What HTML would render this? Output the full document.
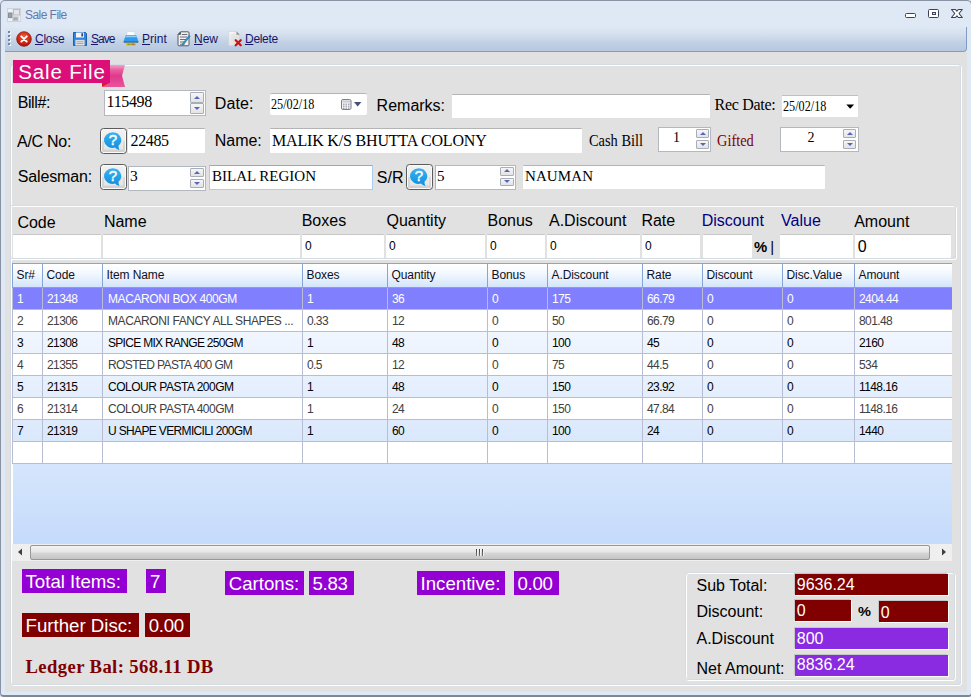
<!DOCTYPE html>
<html><head><meta charset="utf-8"><title>Sale File</title>
<style>
*{box-sizing:border-box;margin:0;padding:0}
html,body{width:971px;height:697px;overflow:hidden;background:#dfe9f5}
body{position:relative;font-family:"Liberation Sans",sans-serif;color:#000}
body>div,body>svg{position:absolute}
#frame{left:0;top:0;width:972px;height:697px;background:#dfe9f5;border:1px solid #8a93a3;border-bottom:2px solid #7f8797;border-radius:5px 5px 4px 4px}
#tb{left:5px;top:27px;width:962px;height:25px;background:linear-gradient(#dee8f4 0%,#d5e0ee 30%,#c3d2e5 60%,#b6c8de 100%);border-bottom:1px solid #7f9cc6;border-right:1px solid #7f9cc6;border-radius:0 0 4px 0}
.grip{width:2px;height:2px;background:#6d86b0;box-shadow:1px 1px 0 #f4f8fc}
#content{left:5px;top:52px;width:962px;height:640px;background:#e1e1e1}
.t{white-space:nowrap;line-height:1}
.t u{text-decoration:underline;text-underline-offset:1px}
.ar{font-family:"Liberation Sans",sans-serif}
.tm{font-family:"Liberation Serif",serif}
.box{background:#fff}
.gb{border:1px solid #fff;border-radius:3px}
.gbi{border-left-color:transparent;border-radius:0 3px 3px 0}
.gbi::before{border-left-color:transparent !important}
.gb::before{content:"";position:absolute;left:-2px;top:-2px;right:0;bottom:0;border:1px solid #d3dbe3;border-radius:3px}
.spb{border:1px solid #a9adb8;border-radius:1px;background:linear-gradient(#f6f6f6,#e3e3e6)}
.spb i{position:absolute;left:50%;top:50%;width:0;height:0;border-left:3px solid transparent;border-right:3px solid transparent;margin-left:-3px}
.spb i.up{border-bottom:3.5px solid #5468ba;margin-top:-2px}
.spb i.dn{border-top:3.5px solid #5468ba;margin-top:-1.5px}
.qb{border:1px solid #5c5c5c;border-radius:3.5px;background:linear-gradient(#f3f3f3 0%,#ececec 48%,#dcdcdc 52%,#d0d0d0 100%);box-shadow:inset 0 0 0 1px #fafafa}
#grid{left:12px;top:263px;width:940px;height:281px;background:linear-gradient(#ffffff,#c5dbfb)}
.gh{background:#fff;border-top:1px solid #8aa4cc}
.ghc{background:linear-gradient(#ffffff 0%,#f3f8ff 40%,#d4e5fb 100%);border-left:1px solid #86a4d4;border-bottom:1px solid #86a3d0;font-size:12px;color:#101020}
.ghc span{position:absolute;left:3.5px;top:4px;white-space:nowrap;line-height:14px;letter-spacing:-0.1px}
.gc{overflow:hidden;font-size:12px;border-left:1px solid #b9bdd3;border-bottom:1px solid #b9bdd3}
.gc span{position:absolute;left:4px;top:4px;white-space:nowrap;line-height:14px;letter-spacing:-0.6px}
.gc.nm span{left:5px}
.r0{background:#8080ff;color:#fff;border-color:#b9bdd3}
.ra{background:transparent;color:#000}
.rb{background:#fff;color:#404040}
#sb{left:12px;top:544px;width:940px;height:17px;background:#efefef}
#thumb{left:30px;top:545px;width:900px;height:15px;border:1px solid #979797;border-radius:2px;background:linear-gradient(#f3f3f3 0%,#e6e6e6 45%,#d6d6d6 55%,#c4c4c6 100%)}
.gripl{width:1px;height:7px;background:linear-gradient(#3a3a3a,#7a7a7a);box-shadow:1px 0 0 rgba(255,255,255,.65)}
</style></head><body>
<div id="frame"></div>
<svg width="0" height="0" style="position:absolute;left:0;top:0"><defs><linearGradient id="qg" x1="0" y1="0" x2="0" y2="1"><stop offset="0" stop-color="#38b2f2"/><stop offset="1" stop-color="#0f8fdc"/></linearGradient></defs></svg>
<svg style="position:absolute;left:7px;top:8px" width="14" height="14" viewBox="0 0 14 14"><rect x="0.5" y="0.5" width="13" height="13" fill="#e9edf2" stroke="#cdd3db"/><rect x="6.5" y="1.5" width="6" height="5.500" fill="#e4e6ea" stroke="#b9bec6"/><rect x="1.500" y="5" width="3.500" height="4.500" fill="#9a9ea6" stroke="#8a8e96"/><rect x="6" y="9" width="5" height="3.500" fill="#a9adb5" stroke="#c3c7cd"/><rect x="1.500" y="1.500" width="3.500" height="2.500" fill="#f1f3f6"/><rect x="1.500" y="11" width="1.500" height="2" fill="#f1f3f6"/><rect x="3.800" y="11" width="1.200" height="2" fill="#f1f3f6"/><rect x="12" y="9" width="1.200" height="3.500" fill="#f1f3f6"/></svg>
<div class="t ar " style="left:25px;top:9px;font-size:12px;color:#6678a4;letter-spacing:-0.55px">Sale File</div>
<svg style="position:absolute;left:900px;top:5px" width="68" height="18" viewBox="900 5 68 18"><rect x="905.5" y="13.5" width="10" height="4" rx="1" fill="#fff" stroke="#3d4157" stroke-width="1"/><rect x="928.5" y="9.500" width="10" height="8" rx="1" fill="#fff" stroke="#3d4157" stroke-width="1"/><rect x="932.5" y="12.5" width="3" height="2" fill="#dfe6f2" stroke="#3d4157" stroke-width="1"/><path d="M951.5 9.500h4l1.400 1.700l1.400-1.700h4l-3.300 4l3.300 4h-4l-1.400-1.700l-1.400 1.700h-4l3.300-4z" fill="#fff" stroke="#3d4157" stroke-width="1.100" stroke-linejoin="round"/></svg>
<div id="tb"></div>
<div class="grip" style="left:8px;top:31px"></div>
<div class="grip" style="left:8px;top:35px"></div>
<div class="grip" style="left:8px;top:39px"></div>
<div class="grip" style="left:8px;top:43px"></div>
<svg style="position:absolute;left:16px;top:31px" width="16" height="16" viewBox="0 0 16 16"><defs><radialGradient id="rg" cx="50%" cy="35%" r="65%"><stop offset="0" stop-color="#f0603a"/><stop offset="0.6" stop-color="#d42a12"/><stop offset="1" stop-color="#a80e08"/></radialGradient></defs><circle cx="8" cy="8" r="7.300" fill="url(#rg)" stroke="#8e1a10" stroke-width="0.8"/><path d="M5.300 5.300L10.700 10.700M10.700 5.300L5.300 10.700" stroke="#fff" stroke-width="1.900" stroke-linecap="round"/></svg>
<div class="t ar " style="left:35px;top:33px;font-size:12px;color:#15156b;letter-spacing:-0.25px"><u>C</u>lose</div>
<svg style="position:absolute;left:72px;top:31px" width="16" height="16" viewBox="0 0 16 16"><path d="M1.500 1.500h12l1 1v12h-13z" fill="#2f86e0" stroke="#1a5fb0" stroke-width="1"/><rect x="4" y="1.500" width="8" height="5" fill="#f4f7fb"/><rect x="9.300" y="2.200" width="1.800" height="3.300" fill="#3a4a66"/><rect x="3.500" y="9" width="9" height="5.500" fill="#e8e8e8" stroke="#b8b8b8" stroke-width="0.5"/><path d="M4.500 10.800h7M4.500 12.600h7" stroke="#9a9a9a" stroke-width="0.9"/></svg>
<div class="t ar " style="left:91px;top:33px;font-size:12px;color:#15156b;letter-spacing:-0.95px"><u>S</u>ave</div>
<svg style="position:absolute;left:123px;top:31px" width="16" height="16" viewBox="0 0 16 16"><path d="M4.200 0.500h7.200l0.900 4.500h-9z" fill="#fbfcfd" stroke="#cfd8e2" stroke-width="0.7"/><path d="M2.800 4.200h10.400l2.300 6.300q0.200 0.900-0.800 0.900h-13.400q-1 0-0.800-0.900z" fill="#2f9bee"/><path d="M2.600 5h10.800l0.500 1.300h-11.800z" fill="#8fd0fb"/><path d="M0.800 10.200h14.400v1q0 0.600-0.600 0.600h-13.200q-0.600 0-0.600-0.600z" fill="#3a6ea8"/><rect x="3" y="11.800" width="10" height="3" fill="#d9c228"/><rect x="4.500" y="12.600" width="3" height="1.200" fill="#7a9a2a"/><rect x="8.500" y="12.600" width="3" height="1.200" fill="#b85a1a"/></svg>
<div class="t ar " style="left:142px;top:33px;font-size:12px;color:#15156b;letter-spacing:0.05px"><u>P</u>rint</div>
<svg style="position:absolute;left:177px;top:31px" width="16" height="16" viewBox="0 0 16 16"><path d="M3.500 0.800h7.500q1 0 1 1v12q0 1-1 1h-9q-1 0-1-1v-10.500z" fill="#f1f1f1" stroke="#555a62" stroke-width="1"/><path d="M1 3.800l2.800-3v3z" fill="#3a3d44"/><path d="M4.800 3.500h5.500M3 6h7M3 8.500h6M3 11h5M3 13.300h4.500" stroke="#6a6e78" stroke-width="1.100"/><path d="M13.200 5.200l-6.300 8l-1.400 1.400l0.200-2.200l6.300-8z" fill="#2f9dcc" stroke="#1c6f9a" stroke-width="0.6"/></svg>
<div class="t ar " style="left:194px;top:33px;font-size:12px;color:#15156b;letter-spacing:-0.05px"><u>N</u>ew</div>
<svg style="position:absolute;left:228px;top:31px" width="16" height="16" viewBox="0 0 16 16"><defs><linearGradient id="dg" x1="0" y1="0" x2="1" y2="1"><stop offset="0" stop-color="#fbfbfb"/><stop offset="1" stop-color="#d6d6d6"/></linearGradient></defs><path d="M0.800 0.500h7.700l3.200 3.200v11h-10.900z" fill="url(#dg)" stroke="#cfcfcf" stroke-width="0.6"/><path d="M8.500 0.500v3.200h3.200z" fill="#8a8a8a"/><path d="M2.500 4h5M2.500 6h7M2.500 8h4.500M2.500 10h3.500" stroke="#dadada" stroke-width="0.8"/><path d="M7.700 9.300l5 5M12.700 9.300l-5 5" stroke="#c81414" stroke-width="2.300" stroke-linecap="round"/></svg>
<div class="t ar " style="left:245px;top:33px;font-size:12px;color:#15156b;letter-spacing:-0.3px"><u>D</u>elete</div>
<div id="content"></div>
<div class="gb" style="left:11px;top:65px;width:951px;height:621px"></div>
<svg style="position:absolute;left:12px;top:59px" width="116" height="29" viewBox="12 59 116 29"><defs><linearGradient id="rb" x1="0" y1="0" x2="0" y2="1"><stop offset="0" stop-color="#f4a2c9"/><stop offset="0.22" stop-color="#ea5ea1"/><stop offset="0.5" stop-color="#e1388a"/><stop offset="1" stop-color="#e9559d"/></linearGradient></defs><path d="M110 65H125L122 75.800L125 87H102L110 83z" fill="url(#rb)"/><path d="M102 83H110L102 87z" fill="#d81e1e"/><rect x="13" y="60" width="97" height="23" fill="#dc0f78"/></svg>
<div class="t ar " style="left:18.3px;top:62px;font-size:20.5px;color:#fff;letter-spacing:0.85px">Sale File</div>
<div class="t ar " style="left:17.7px;top:95px;font-size:16px;color:#000;letter-spacing:-0.4px">Bill#:</div>
<div class="box" style="left:104px;top:90px;width:102px;height:26px;border:1px solid #b3b7c0"></div>
<div class="t tm " style="left:106.6px;top:94px;font-size:16px;color:#000;letter-spacing:-0.35px">115498</div>
<div class="spb" style="left:190px;top:92px;width:14px;height:11.0px"><i class="up"></i></div>
<div class="spb" style="left:190px;top:103.0px;width:14px;height:11.0px"><i class="dn"></i></div>
<div class="t ar " style="left:214.8px;top:96px;font-size:16px;color:#000;letter-spacing:0.1px">Date:</div>
<div class="box" style="left:270px;top:93px;width:97px;height:22px;border-top:1px solid #b4b4b4;border-radius:2px"></div>
<div class="t tm " style="left:270.7px;top:98px;font-size:14px;color:#000;transform:scaleX(0.87);transform-origin:0 0">25/02/18</div>
<svg style="position:absolute;left:341px;top:99px" width="21" height="11" viewBox="0 0 21 11"><rect x="0.5" y="0.5" width="9.500" height="10" rx="1.500" fill="#f2f2f4" stroke="#7a7e8c"/><rect x="1.500" y="1.500" width="7.500" height="2" fill="#c9ccd6"/><path d="M2 5.200h6.500M2 7.200h6.500M2 9.200h6.500" stroke="#8a8e9c" stroke-width="1" stroke-dasharray="1.500 1"/><path d="M13 3h7.400l-3.700 4.500z" fill="#44507a"/></svg>
<div class="t ar " style="left:376.6px;top:98px;font-size:16px;color:#000;">Remarks:</div>
<div class="box" style="left:452px;top:94px;width:258px;height:24px;border-top:1px solid #b4b4b4;border-radius:1px"></div>
<div class="t tm " style="left:714.5px;top:97px;font-size:16px;color:#000;letter-spacing:-0.29px">Rec Date:</div>
<div class="box" style="left:782px;top:95px;width:76px;height:22px;border-top:1px solid #c0c0c0"></div>
<div class="t tm " style="left:783px;top:100px;font-size:14px;color:#000;transform:scaleX(0.87);transform-origin:0 0">25/02/18</div>
<svg style="position:absolute;left:846px;top:104px" width="9" height="5" viewBox="0 0 9 5"><path d="M0.300 0.500h7.800l-3.900 4.200z" fill="#000"/></svg>
<div class="t ar " style="left:17px;top:134px;font-size:16px;color:#000;letter-spacing:-0.27px">A/C No:</div>
<div class="qb" style="left:100px;top:128px;width:27px;height:26px"><svg width="22" height="22" viewBox="0 0 22 22" style="position:absolute;left:1.0px;top:0.5px"><rect x="2" y="1.500" width="19" height="18" fill="#eeeeee" opacity="0.7"/><path d="M10.800 2.300a8.800 7.800 0 1 0 2.400 15.300c1 1.300 2.400 2.100 4.300 2.300c-0.800-1.300-1.100-2.600-0.900-4.300a8.800 7.800 0 0 0-5.800-13.300z" fill="url(#qg)"/><text x="10.800" y="15.200" text-anchor="middle" font-family="Liberation Sans, sans-serif" font-size="15" fill="#fff" stroke="#fff" stroke-width="0.45">?</text></svg></div>
<div class="box" style="left:128px;top:128px;width:77px;height:25px;border-top:1px solid #b4b4b4;border-radius:1px"></div>
<div class="t tm " style="left:130.5px;top:133px;font-size:16px;color:#000;letter-spacing:-0.35px">22485</div>
<div class="t ar " style="left:214.7px;top:133px;font-size:16px;color:#000;">Name:</div>
<div class="box" style="left:270px;top:128px;width:312px;height:25px;border-top:1px solid #b4b4b4;border-radius:1px"></div>
<div class="t tm " style="left:272px;top:133px;font-size:16px;color:#000;letter-spacing:-0.18px">MALIK K/S BHUTTA COLONY</div>
<div class="t tm " style="left:589.2px;top:133px;font-size:16px;color:#000;transform:scaleX(0.9);transform-origin:0 0">Cash Bill</div>
<div class="box" style="left:658px;top:127px;width:53px;height:25px;border:1px solid #b3b7c0"></div>
<div class="t tm " style="left:673px;top:131px;font-size:14px;color:#000;">1</div>
<div class="spb" style="left:696px;top:129px;width:13px;height:9.0px"><i class="up"></i></div>
<div class="spb" style="left:696px;top:140.0px;width:13px;height:9.0px"><i class="dn"></i></div>
<div class="t tm " style="left:717px;top:133px;font-size:16px;color:#800000;transform:scaleX(0.9);transform-origin:0 0">Gifted</div>
<div class="box" style="left:780px;top:127px;width:79px;height:25px;border:1px solid #b3b7c0"></div>
<div class="t tm " style="left:807.5px;top:131px;font-size:14px;color:#000;">2</div>
<div class="spb" style="left:843px;top:129px;width:13px;height:9.0px"><i class="up"></i></div>
<div class="spb" style="left:843px;top:140.0px;width:13px;height:9.0px"><i class="dn"></i></div>
<div class="t ar " style="left:17.7px;top:169px;font-size:16px;color:#000;letter-spacing:-0.13px">Salesman:</div>
<div class="qb" style="left:100px;top:164px;width:27px;height:26px"><svg width="22" height="22" viewBox="0 0 22 22" style="position:absolute;left:1.0px;top:0.5px"><rect x="2" y="1.500" width="19" height="18" fill="#eeeeee" opacity="0.7"/><path d="M10.800 2.300a8.800 7.800 0 1 0 2.400 15.300c1 1.300 2.400 2.100 4.300 2.300c-0.800-1.300-1.100-2.600-0.900-4.300a8.800 7.800 0 0 0-5.800-13.300z" fill="url(#qg)"/><text x="10.800" y="15.200" text-anchor="middle" font-family="Liberation Sans, sans-serif" font-size="15" fill="#fff" stroke="#fff" stroke-width="0.45">?</text></svg></div>
<div class="box" style="left:128px;top:166px;width:78px;height:25px;border:1px solid #b3b7c0"></div>
<div class="t tm " style="left:130px;top:168px;font-size:15.5px;color:#000;">3</div>
<div class="spb" style="left:190px;top:168px;width:14px;height:9.0px"><i class="up"></i></div>
<div class="spb" style="left:190px;top:179.0px;width:14px;height:9.0px"><i class="dn"></i></div>
<div class="box" style="left:209px;top:165px;width:164px;height:25px;border:1px solid #a9cdf0;border-top-color:#7fb0e4;border-radius:1px"></div>
<div class="t tm " style="left:212px;top:169px;font-size:15px;color:#000;">BILAL REGION</div>
<div class="t ar " style="left:376.8px;top:170px;font-size:16px;color:#000;">S/R</div>
<div class="qb" style="left:406px;top:164px;width:27px;height:26px"><svg width="22" height="22" viewBox="0 0 22 22" style="position:absolute;left:1.0px;top:0.5px"><rect x="2" y="1.500" width="19" height="18" fill="#eeeeee" opacity="0.7"/><path d="M10.800 2.300a8.800 7.800 0 1 0 2.400 15.300c1 1.300 2.400 2.100 4.300 2.300c-0.800-1.300-1.100-2.600-0.900-4.300a8.800 7.800 0 0 0-5.800-13.300z" fill="url(#qg)"/><text x="10.800" y="15.200" text-anchor="middle" font-family="Liberation Sans, sans-serif" font-size="15" fill="#fff" stroke="#fff" stroke-width="0.45">?</text></svg></div>
<div class="box" style="left:435px;top:165px;width:81px;height:25px;border:1px solid #b3b7c0"></div>
<div class="t tm " style="left:437px;top:169px;font-size:15px;color:#000;">5</div>
<div class="spb" style="left:500px;top:167px;width:14px;height:8.5px"><i class="up"></i></div>
<div class="spb" style="left:500px;top:177.5px;width:14px;height:8.5px"><i class="dn"></i></div>
<div class="box" style="left:523px;top:165px;width:302px;height:24px;border-top:1px solid #b4b4b4;border-radius:1px"></div>
<div class="t tm " style="left:525px;top:169px;font-size:15px;color:#000;letter-spacing:0.1px">NAUMAN</div>
<div class="gb gbi" style="left:11px;top:206px;width:946px;height:54px"></div>
<div class="t ar " style="left:17.4px;top:215px;font-size:16px;color:#000;">Code</div>
<div class="t ar " style="left:103.9px;top:214px;font-size:16px;color:#000;">Name</div>
<div class="t ar " style="left:301.7px;top:213px;font-size:16px;color:#000;">Boxes</div>
<div class="t ar " style="left:386.5px;top:213px;font-size:16px;color:#000;">Quantity</div>
<div class="t ar " style="left:487.5px;top:213px;font-size:16px;color:#000;">Bonus</div>
<div class="t ar " style="left:549px;top:213px;font-size:16px;color:#000;">A.Discount</div>
<div class="t ar " style="left:641.4px;top:213px;font-size:16px;color:#000;">Rate</div>
<div class="t ar " style="left:701.7px;top:213px;font-size:16px;color:#000080;">Discount</div>
<div class="t ar " style="left:781.1px;top:213px;font-size:16px;color:#000080;">Value</div>
<div class="t ar " style="left:854.2px;top:214px;font-size:16px;color:#000;">Amount</div>
<div class="box" style="left:13px;top:234px;width:88px;height:24px;border-top:1px solid #c6c6c6;border-radius:1px"></div>
<div class="box" style="left:103px;top:234px;width:196.5px;height:24px;border-top:1px solid #c6c6c6;border-radius:1px"></div>
<div class="box" style="left:302px;top:234px;width:82px;height:24px;border-top:1px solid #c6c6c6;border-radius:1px"></div>
<div class="box" style="left:386px;top:234px;width:99px;height:24px;border-top:1px solid #c6c6c6;border-radius:1px"></div>
<div class="box" style="left:487px;top:234px;width:58px;height:24px;border-top:1px solid #c6c6c6;border-radius:1px"></div>
<div class="box" style="left:547px;top:234px;width:93px;height:24px;border-top:1px solid #c6c6c6;border-radius:1px"></div>
<div class="box" style="left:642px;top:234px;width:58px;height:24px;border-top:1px solid #c6c6c6;border-radius:1px"></div>
<div class="box" style="left:703px;top:234px;width:49px;height:24px;border-top:1px solid #c6c6c6;border-radius:1px"></div>
<div class="box" style="left:780px;top:234px;width:73px;height:24px;border-top:1px solid #c6c6c6;border-radius:1px"></div>
<div class="box" style="left:855px;top:234px;width:96px;height:24px;border-top:1px solid #c6c6c6;border-radius:1px"></div>
<div class="t ar " style="left:304.9px;top:240px;font-size:12px;color:#000;">0</div>
<div class="t ar " style="left:389px;top:240px;font-size:12px;color:#000;">0</div>
<div class="t ar " style="left:490px;top:240px;font-size:12px;color:#000;">0</div>
<div class="t ar " style="left:550px;top:240px;font-size:12px;color:#000;">0</div>
<div class="t ar " style="left:645px;top:240px;font-size:12px;color:#000;">0</div>
<div class="t ar " style="left:753.5px;top:240px;font-size:14px;color:#000;font-weight:bold;transform:scaleX(1.06);transform-origin:0 0">%</div>
<div class="t ar " style="left:770.3px;top:239px;font-size:15px;color:#000;">|</div>
<div class="t ar " style="left:857.7px;top:239px;font-size:16px;color:#000;">0</div>
<div id="grid"></div>
<div class="gh" style="left:12px;top:263px;width:940px;height:25px"></div>
<div class="ghc" style="left:12px;top:264px;width:30px;height:24px"><span>Sr#</span></div>
<div class="ghc" style="left:42px;top:264px;width:60px;height:24px"><span>Code</span></div>
<div class="ghc" style="left:102px;top:264px;width:200px;height:24px"><span>Item Name</span></div>
<div class="ghc" style="left:302px;top:264px;width:85px;height:24px"><span>Boxes</span></div>
<div class="ghc" style="left:387px;top:264px;width:100px;height:24px"><span>Quantity</span></div>
<div class="ghc" style="left:487px;top:264px;width:60px;height:24px"><span>Bonus</span></div>
<div class="ghc" style="left:547px;top:264px;width:95px;height:24px"><span>A.Discount</span></div>
<div class="ghc" style="left:642px;top:264px;width:60px;height:24px"><span>Rate</span></div>
<div class="ghc" style="left:702px;top:264px;width:80px;height:24px"><span>Discount</span></div>
<div class="ghc" style="left:782px;top:264px;width:72px;height:24px"><span>Disc.Value</span></div>
<div class="ghc" style="left:854px;top:264px;width:98px;height:24px"><span>Amount</span></div>
<div class="gc r0" style="left:12px;top:288px;width:30px;height:22px"><span>1</span></div>
<div class="gc r0" style="left:42px;top:288px;width:60px;height:22px"><span>21348</span></div>
<div class="gc r0 nm" style="left:102px;top:288px;width:200px;height:22px"><span style="letter-spacing:-0.4px">MACARONI BOX 400GM</span></div>
<div class="gc r0" style="left:302px;top:288px;width:85px;height:22px"><span>1</span></div>
<div class="gc r0" style="left:387px;top:288px;width:100px;height:22px"><span>36</span></div>
<div class="gc r0" style="left:487px;top:288px;width:60px;height:22px"><span>0</span></div>
<div class="gc r0" style="left:547px;top:288px;width:95px;height:22px"><span>175</span></div>
<div class="gc r0" style="left:642px;top:288px;width:60px;height:22px"><span>66.79</span></div>
<div class="gc r0" style="left:702px;top:288px;width:80px;height:22px"><span>0</span></div>
<div class="gc r0" style="left:782px;top:288px;width:72px;height:22px"><span>0</span></div>
<div class="gc r0" style="left:854px;top:288px;width:98px;height:22px"><span>2404.44</span></div>
<div class="gc rb" style="left:12px;top:310px;width:30px;height:22px"><span>2</span></div>
<div class="gc rb" style="left:42px;top:310px;width:60px;height:22px"><span>21306</span></div>
<div class="gc rb nm" style="left:102px;top:310px;width:200px;height:22px"><span style="letter-spacing:-0.4px">MACARONI FANCY ALL SHAPES ...</span></div>
<div class="gc rb" style="left:302px;top:310px;width:85px;height:22px"><span>0.33</span></div>
<div class="gc rb" style="left:387px;top:310px;width:100px;height:22px"><span>12</span></div>
<div class="gc rb" style="left:487px;top:310px;width:60px;height:22px"><span>0</span></div>
<div class="gc rb" style="left:547px;top:310px;width:95px;height:22px"><span>50</span></div>
<div class="gc rb" style="left:642px;top:310px;width:60px;height:22px"><span>66.79</span></div>
<div class="gc rb" style="left:702px;top:310px;width:80px;height:22px"><span>0</span></div>
<div class="gc rb" style="left:782px;top:310px;width:72px;height:22px"><span>0</span></div>
<div class="gc rb" style="left:854px;top:310px;width:98px;height:22px"><span>801.48</span></div>
<div class="gc ra" style="left:12px;top:332px;width:30px;height:22px"><span>3</span></div>
<div class="gc ra" style="left:42px;top:332px;width:60px;height:22px"><span>21308</span></div>
<div class="gc ra nm" style="left:102px;top:332px;width:200px;height:22px"><span style="letter-spacing:-0.7px">SPICE MIX RANGE 250GM</span></div>
<div class="gc ra" style="left:302px;top:332px;width:85px;height:22px"><span>1</span></div>
<div class="gc ra" style="left:387px;top:332px;width:100px;height:22px"><span>48</span></div>
<div class="gc ra" style="left:487px;top:332px;width:60px;height:22px"><span>0</span></div>
<div class="gc ra" style="left:547px;top:332px;width:95px;height:22px"><span>100</span></div>
<div class="gc ra" style="left:642px;top:332px;width:60px;height:22px"><span>45</span></div>
<div class="gc ra" style="left:702px;top:332px;width:80px;height:22px"><span>0</span></div>
<div class="gc ra" style="left:782px;top:332px;width:72px;height:22px"><span>0</span></div>
<div class="gc ra" style="left:854px;top:332px;width:98px;height:22px"><span>2160</span></div>
<div class="gc rb" style="left:12px;top:354px;width:30px;height:22px"><span>4</span></div>
<div class="gc rb" style="left:42px;top:354px;width:60px;height:22px"><span>21355</span></div>
<div class="gc rb nm" style="left:102px;top:354px;width:200px;height:22px"><span style="letter-spacing:-0.62px">ROSTED PASTA 400 GM</span></div>
<div class="gc rb" style="left:302px;top:354px;width:85px;height:22px"><span>0.5</span></div>
<div class="gc rb" style="left:387px;top:354px;width:100px;height:22px"><span>12</span></div>
<div class="gc rb" style="left:487px;top:354px;width:60px;height:22px"><span>0</span></div>
<div class="gc rb" style="left:547px;top:354px;width:95px;height:22px"><span>75</span></div>
<div class="gc rb" style="left:642px;top:354px;width:60px;height:22px"><span>44.5</span></div>
<div class="gc rb" style="left:702px;top:354px;width:80px;height:22px"><span>0</span></div>
<div class="gc rb" style="left:782px;top:354px;width:72px;height:22px"><span>0</span></div>
<div class="gc rb" style="left:854px;top:354px;width:98px;height:22px"><span>534</span></div>
<div class="gc ra" style="left:12px;top:376px;width:30px;height:22px"><span>5</span></div>
<div class="gc ra" style="left:42px;top:376px;width:60px;height:22px"><span>21315</span></div>
<div class="gc ra nm" style="left:102px;top:376px;width:200px;height:22px"><span style="letter-spacing:-0.48px">COLOUR PASTA 200GM</span></div>
<div class="gc ra" style="left:302px;top:376px;width:85px;height:22px"><span>1</span></div>
<div class="gc ra" style="left:387px;top:376px;width:100px;height:22px"><span>48</span></div>
<div class="gc ra" style="left:487px;top:376px;width:60px;height:22px"><span>0</span></div>
<div class="gc ra" style="left:547px;top:376px;width:95px;height:22px"><span>150</span></div>
<div class="gc ra" style="left:642px;top:376px;width:60px;height:22px"><span>23.92</span></div>
<div class="gc ra" style="left:702px;top:376px;width:80px;height:22px"><span>0</span></div>
<div class="gc ra" style="left:782px;top:376px;width:72px;height:22px"><span>0</span></div>
<div class="gc ra" style="left:854px;top:376px;width:98px;height:22px"><span>1148.16</span></div>
<div class="gc rb" style="left:12px;top:398px;width:30px;height:22px"><span>6</span></div>
<div class="gc rb" style="left:42px;top:398px;width:60px;height:22px"><span>21314</span></div>
<div class="gc rb nm" style="left:102px;top:398px;width:200px;height:22px"><span style="letter-spacing:-0.48px">COLOUR PASTA 400GM</span></div>
<div class="gc rb" style="left:302px;top:398px;width:85px;height:22px"><span>1</span></div>
<div class="gc rb" style="left:387px;top:398px;width:100px;height:22px"><span>24</span></div>
<div class="gc rb" style="left:487px;top:398px;width:60px;height:22px"><span>0</span></div>
<div class="gc rb" style="left:547px;top:398px;width:95px;height:22px"><span>150</span></div>
<div class="gc rb" style="left:642px;top:398px;width:60px;height:22px"><span>47.84</span></div>
<div class="gc rb" style="left:702px;top:398px;width:80px;height:22px"><span>0</span></div>
<div class="gc rb" style="left:782px;top:398px;width:72px;height:22px"><span>0</span></div>
<div class="gc rb" style="left:854px;top:398px;width:98px;height:22px"><span>1148.16</span></div>
<div class="gc ra" style="left:12px;top:420px;width:30px;height:22px"><span>7</span></div>
<div class="gc ra" style="left:42px;top:420px;width:60px;height:22px"><span>21319</span></div>
<div class="gc ra nm" style="left:102px;top:420px;width:200px;height:22px"><span style="letter-spacing:-0.65px">U SHAPE VERMICILI 200GM</span></div>
<div class="gc ra" style="left:302px;top:420px;width:85px;height:22px"><span>1</span></div>
<div class="gc ra" style="left:387px;top:420px;width:100px;height:22px"><span>60</span></div>
<div class="gc ra" style="left:487px;top:420px;width:60px;height:22px"><span>0</span></div>
<div class="gc ra" style="left:547px;top:420px;width:95px;height:22px"><span>100</span></div>
<div class="gc ra" style="left:642px;top:420px;width:60px;height:22px"><span>24</span></div>
<div class="gc ra" style="left:702px;top:420px;width:80px;height:22px"><span>0</span></div>
<div class="gc ra" style="left:782px;top:420px;width:72px;height:22px"><span>0</span></div>
<div class="gc ra" style="left:854px;top:420px;width:98px;height:22px"><span>1440</span></div>
<div class="gc rb" style="left:12px;top:442px;width:30px;height:22px"><span></span></div>
<div class="gc rb" style="left:42px;top:442px;width:60px;height:22px"><span></span></div>
<div class="gc rb nm" style="left:102px;top:442px;width:200px;height:22px"><span></span></div>
<div class="gc rb" style="left:302px;top:442px;width:85px;height:22px"><span></span></div>
<div class="gc rb" style="left:387px;top:442px;width:100px;height:22px"><span></span></div>
<div class="gc rb" style="left:487px;top:442px;width:60px;height:22px"><span></span></div>
<div class="gc rb" style="left:547px;top:442px;width:95px;height:22px"><span></span></div>
<div class="gc rb" style="left:642px;top:442px;width:60px;height:22px"><span></span></div>
<div class="gc rb" style="left:702px;top:442px;width:80px;height:22px"><span></span></div>
<div class="gc rb" style="left:782px;top:442px;width:72px;height:22px"><span></span></div>
<div class="gc rb" style="left:854px;top:442px;width:98px;height:22px"><span></span></div>
<div style="left:12px;top:464px;width:1px;height:80px;background:#fff"></div>
<div id="sb"></div>
<div id="thumb"></div>
<svg style="position:absolute;left:17px;top:548px" width="6" height="8" viewBox="0 0 6 8"><path d="M5 0.500v7l-4-3.500z" fill="#404040"/></svg>
<svg style="position:absolute;left:941px;top:548px" width="6" height="8" viewBox="0 0 6 8"><path d="M1 0.500v7l4-3.500z" fill="#404040"/></svg>
<div class="gripl" style="left:476px;top:549px"></div><div class="gripl" style="left:479px;top:549px"></div><div class="gripl" style="left:482px;top:549px"></div>
<div class="box" style="left:22px;top:569px;width:105px;height:24px;background:#9400d3"></div>
<div class="t ar " style="left:25.5px;top:573px;font-size:18.67px;color:#fff;letter-spacing:0px">Total Items:</div>
<div class="box" style="left:146px;top:569px;width:20px;height:24px;background:#9400d3"></div>
<div class="t ar " style="left:150px;top:573px;font-size:18.67px;color:#fff;letter-spacing:0px">7</div>
<div class="box" style="left:225px;top:571px;width:79px;height:24px;background:#9400d3"></div>
<div class="t ar " style="left:228.7px;top:575px;font-size:18.67px;color:#fff;letter-spacing:0px">Cartons:</div>
<div class="box" style="left:309px;top:571px;width:45px;height:24px;background:#9400d3"></div>
<div class="t ar " style="left:312.5px;top:575px;font-size:18.67px;color:#fff;letter-spacing:-0.3px">5.83</div>
<div class="box" style="left:417px;top:571px;width:88px;height:24px;background:#9400d3"></div>
<div class="t ar " style="left:420.5px;top:575px;font-size:18.67px;color:#fff;letter-spacing:0px">Incentive:</div>
<div class="box" style="left:514px;top:571px;width:45px;height:24px;background:#9400d3"></div>
<div class="t ar " style="left:517.5px;top:575px;font-size:18.67px;color:#fff;letter-spacing:-0.3px">0.00</div>
<div class="box" style="left:22px;top:613px;width:117px;height:24px;background:#800000"></div>
<div class="t ar " style="left:25.5px;top:617px;font-size:18.67px;color:#fff;letter-spacing:0px">Further Disc:</div>
<div class="box" style="left:145px;top:613px;width:45px;height:24px;background:#800000"></div>
<div class="t ar " style="left:148.8px;top:617px;font-size:18.67px;color:#fff;letter-spacing:-0.3px">0.00</div>
<div class="t tm " style="left:25.5px;top:658px;font-size:18.67px;color:#800000;font-weight:bold;letter-spacing:0.39px">Ledger Bal: 568.11 DB</div>
<div class="gb" style="left:686px;top:573px;width:270px;height:108px"></div>
<div class="t ar " style="left:696.5px;top:578px;font-size:16px;color:#000;">Sub Total:</div>
<div class="t ar " style="left:696.5px;top:604px;font-size:16px;color:#000;">Discount:</div>
<div class="t ar " style="left:696.5px;top:631px;font-size:16px;color:#000;">A.Discount</div>
<div class="t ar " style="left:696.5px;top:661px;font-size:16px;color:#000;">Net Amount:</div>
<div class="box" style="left:795px;top:574px;width:153px;height:21px;background:#800000;box-shadow:1px 1px 0 #fff,-1px -1px 0 #c6c6c6"></div>
<div class="t ar " style="left:796.8px;top:577px;font-size:16px;color:#fff;">9636.24</div>
<div class="box" style="left:795px;top:600px;width:56px;height:21px;background:#800000;box-shadow:1px 1px 0 #fff,-1px -1px 0 #c6c6c6"></div>
<div class="t ar " style="left:796.8px;top:603px;font-size:16px;color:#fff;">0</div>
<div class="t ar " style="left:857.7px;top:605px;font-size:13px;color:#000;font-weight:bold;transform:scaleX(1.12);transform-origin:0 0">%</div>
<div class="box" style="left:879px;top:601px;width:69px;height:21px;background:#800000;box-shadow:1px 1px 0 #fff,-1px -1px 0 #c6c6c6"></div>
<div class="t ar " style="left:880.8px;top:605px;font-size:16px;color:#fff;">0</div>
<div class="box" style="left:795px;top:628px;width:153px;height:21px;background:#8a2be2;box-shadow:1px 1px 0 #fff,-1px -1px 0 #c6c6c6"></div>
<div class="t ar " style="left:796.8px;top:631px;font-size:16px;color:#fff;">800</div>
<div class="box" style="left:795px;top:655px;width:153px;height:21px;background:#8a2be2;box-shadow:1px 1px 0 #fff,-1px -1px 0 #c6c6c6"></div>
<div class="t ar " style="left:796.8px;top:657px;font-size:16px;color:#fff;">8836.24</div>
</body></html>
